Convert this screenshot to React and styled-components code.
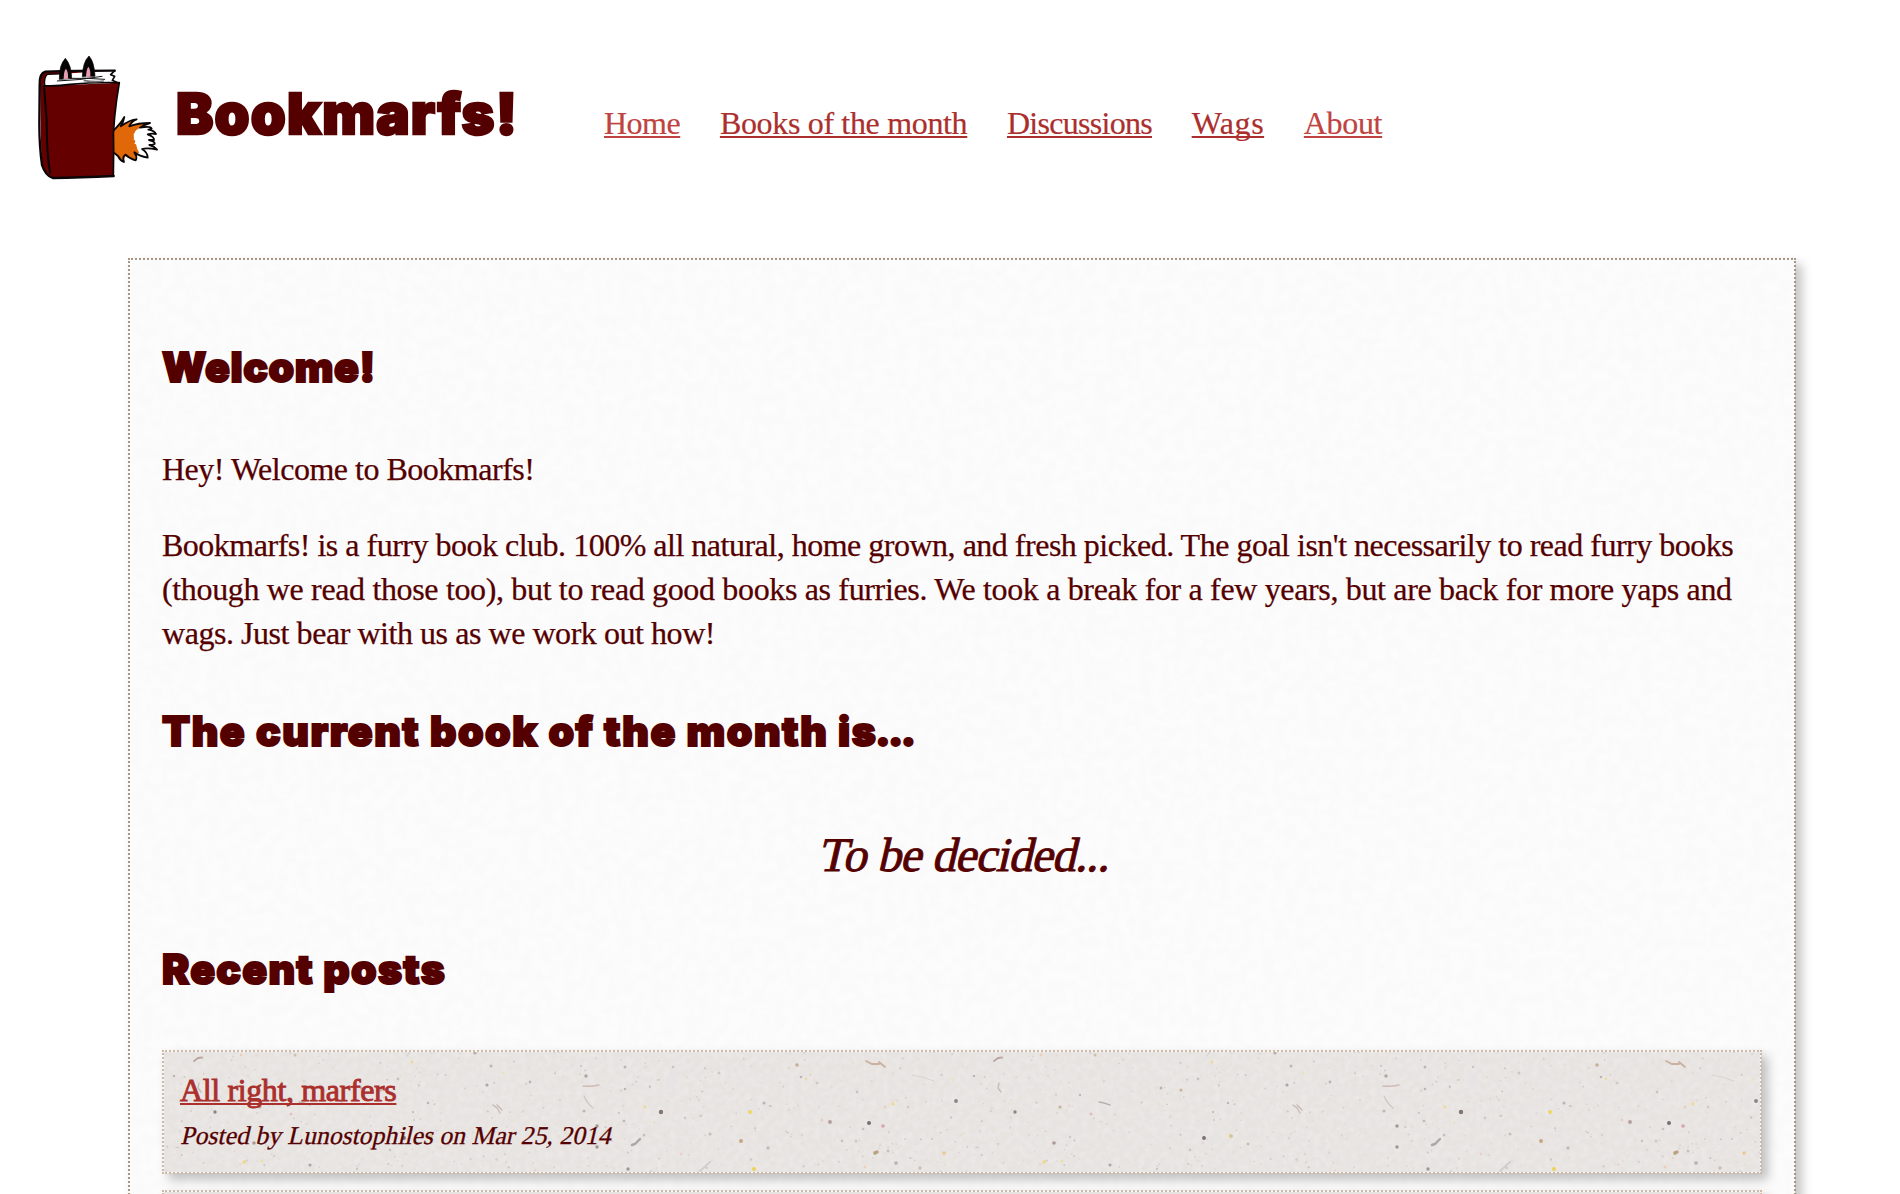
import React from "react";
import styled, { createGlobalStyle } from "styled-components";

const GlobalStyle = createGlobalStyle`
  *, *::before, *::after { box-sizing: border-box; }
  body {
    margin: 0;
    background: #fff;
    color: #500;
    font: 400 32px/44px "Liberation Serif", serif;
  }
  h1, h2, h3, p { margin: 0; font-weight: 400; }
`;

const Page = styled.div`
  height: 1194px;
  overflow: hidden;
`;

const Header = styled.header`
  display: flex;
  align-items: flex-start;
  height: 258px;
  padding: 40px 20px 0;
`;

const LogoArt = styled.svg`
  flex: none;
  width: 153px;
  height: 150px;
`;

const SiteTitle = styled.h1`
  flex: none;
  width: 431px;
  padding: 40px 0 0 3px;
  font: 900 56px/68px Inter, sans-serif;
  letter-spacing: 1.2px;
  -webkit-text-stroke: 2.4px #500;
  stroke-linejoin: round;
  white-space: nowrap;
`;

const Nav = styled.nav`
  display: flex;
  gap: 39.7px;
  padding-top: 61px;
`;

const Link = styled.a`
  color: ${(p) => (p.$soft ? "#bf4340" : "#ab2f2d")};
  letter-spacing: ${(p) => p.$track || 0}px;
  text-decoration: underline;
  text-decoration-thickness: 2px;
  text-decoration-skip-ink: none;
  text-underline-offset: 2px;
  white-space: nowrap;
  -webkit-text-stroke: ${(p) => (p.$bold ? "0.9px" : "0.2px")};
`;

const Panel = styled.main`
  position: relative;
  width: 1668px;
  min-height: 1200px;
  margin-left: 128px;
  padding: 32px;
  border: 2px dotted #a89684;
  background: #fafafa padding-box;
  box-shadow: 6px 6px 10px rgba(0, 0, 0, 0.23);
`;

const Texture = styled.svg`
  position: absolute;
  inset: 0;
  width: 100%;
  height: 100%;
`;

const Content = styled.div`
  position: relative;
`;

const Heading = styled.h2`
  padding-top: ${(p) => p.$above}px;
  padding-bottom: ${(p) => p.$below}px;
  font: 900 41px/48px Inter, sans-serif;
  letter-spacing: ${(p) => p.$track}px;
  -webkit-text-stroke: 2px #500;
  stroke-linejoin: round;
`;

const Dots = styled.span`
  margin-left: -2px;
  letter-spacing: -2.6px;
`;

const Paragraph = styled.p`
  margin-bottom: ${(p) => (p.$last ? 0 : 32)}px;
`;

const Line = styled.span`
  display: block;
  letter-spacing: ${(p) => p.$track}px;
  white-space: nowrap;
  -webkit-text-stroke: 0.25px #500;
`;

const Slanted = styled.span`
  display: inline-block;
  transform: skewX(-13deg);
  transform-origin: 0 75%;
  white-space: nowrap;
`;

const Pick = styled.p`
  font-size: 48px;
  line-height: 68px;
  letter-spacing: -0.85px;
  text-align: center;
  -webkit-text-stroke: 0.9px #500;
`;

const Post = styled.article`
  position: relative;
  height: 124px;
  margin-bottom: 16px;
  padding: 16px;
  border: 2px dotted #cdb9a5;
  background: #e7e3e1 padding-box;
  box-shadow: 6px 6px 10px rgba(0, 0, 0, 0.23);
`;

const PostBody = styled.div`
  position: relative;
  display: flex;
  flex-direction: column;
  align-items: flex-start;
  gap: 6px;
`;

const PostTitle = styled.h3`
  font-size: 32px;
`;

const Byline = styled.p`
  font-size: 25.6px;
  line-height: 36px;
  letter-spacing: 0.04px;
  -webkit-text-stroke: 0.3px #500;
`;

const INK = { stroke: "#0a0506", strokeLinejoin: "round", strokeLinecap: "round" };

function Logo() {
  return (
    <LogoArt viewBox="0 0 459 450" role="img">
      <path
        d="M278 274 L298 254 L313 231 L309 252 L350 238 L333 254 L390 249 L370 262 L393 264 L386 272 L408 282 L388 287 L401 298 L387 304 L403 314 L390 318 L411 329 L368 331 L383 352 L345 342 L349 359 L314 349 L311 364 L293 350 L278 334 Z"
        fill="#fff"
      />
      <path
        d="M278 274 L298 254 L313 231 L309 252 L350 238 L333 254 L390 249 L362 262 L345 275 L341 291 L346 304 L352 328 L358 338 L345 342 L349 359 L314 349 L311 364 L293 350 L278 334 Z"
        fill="#e06808"
      />
      <path d="M349 270l-9 15 6 5-6 8 8 4-5 9 9 3 5 18 25-10 2-40-18-21Z" fill="#fff" />
      <path
        d="M279 273 Q303 250 313 231 Q311 246 302 259 Q330 239 350 238 Q333 244 328 259 Q354 249 390 249 Q370 255 360 263 Q393 257 395 266 Q391 268 385 269 Q404 272 408 282 Q395 279 383 283 Q404 291 402 300 L387 300 Q406 305 404 312 Q397 315 388 315 Q402 318 411 329 Q382 322 366 327 Q383 337 383 353 Q359 349 343 337 Q353 350 347 361 Q328 356 317 344 Q306 350 312 366 Q300 361 294 348 L279 336"
        fill="none"
        strokeWidth="5.5"
        {...INK}
      />
      <path d="M62 110 Q64 97 76 94 L284 92 L273 104 L285 113 L279 122 L296 128 L74 138 Z" fill="#fff" />
      <path d="M60 128 Q60 98 78 94 L270 92 L130 101 L82 103 Q72 112 75 136Z" fill="#650000" />
      <path d="M60 118 L74 138 L298 128 Q284 200 281 270 L280 408 L98 413 Q66 396 64 365 Z" fill="#650000" />
      <g fill="none" {...INK}>
        <path
          d="M284 92 Q170 92 76 95 Q58 99 59 134 L58 250 Q58 320 66 375 Q76 407 98 414 Q180 413 281 408"
          strokeWidth="7"
        />
        <path d="M74 136 Q72 112 82 103 L145 101" strokeWidth="4" />
        <path d="M72 137 Q110 139 150 133 Q220 126 298 128 Q289 180 284 230 Q278 280 281 330 L280 408" strokeWidth="5" />
        <path d="M72 138 L80 240 Q80 340 90 398" strokeWidth="6" />
        <path d="M284 92 L272 104 L284 109 L277 121 L290 127" strokeWidth="5" />
      </g>
      <g fill="none" stroke="#111" strokeWidth="3" strokeLinecap="round">
        <path d="M112 123 Q180 121 246 109" />
        <path d="M150 115 Q210 114 254 118" />
        <path d="M193 122 Q225 127 250 123" stroke="#777" strokeWidth="5" />
      </g>
      <path d="M118 118 Q117 75 136 55 Q154 75 155 114 Z" {...INK} fill="#050203" strokeWidth="2" />
      <path d="M187 110 Q188 66 207 48 Q223 66 225 108 Z" {...INK} fill="#050203" strokeWidth="2" />
      <path d="M131 117 Q131 92 138 86 Q145 94 144 116 Z" fill="#e79cb0" />
      <path d="M198 111 Q199 88 205 80 Q212 88 211 110 Z" fill="#e79cb0" />
    </LogoArt>
  );
}

function PanelTexture() {
  return (
    <Texture aria-hidden="true">
      <filter id="panel-grain" x="0" y="0" width="100%" height="100%">
        <feTurbulence type="fractalNoise" baseFrequency="0.09" numOctaves="3" seed="4" />
        <feColorMatrix values="0 0 0 0 1  0 0 0 0 1  0 0 0 0 1  2.4 0 0 0 -0.75" />
      </filter>
      <rect width="100%" height="100%" filter="url(#panel-grain)" opacity="0.45" />
    </Texture>
  );
}

const GRAY = "#8d8588";
const DARK = "#5d5058";
const TAN = "#b99a78";
const GOLD = "#f0cf55";
const ROSE = "#d79aa4";
const PEACH = "#eeb592";

const FLECKS = [
  [12, 26, 1.3, GRAY], [53, 62, 1.7, DARK], [92, 93, 1.8, "#8a7070"], [82, 112, 1.8, GOLD], [100, 111, 1.6, "#f3dc8c"],
  [98, 57, 1.6, TAN], [129, 64, 1.5, ROSE], [133, 5, 1.5, TAN], [199, 38, 1.5, GRAY], [219, 40, 1.6, TAN],
  [236, 29, 1.4, "#a89c98"], [242, 88, 1.9, DARK], [269, 86, 2, "#d6c27c"], [250, 12, 1.4, GOLD], [148, 115, 1.6, GRAY],
  [228, 100, 1.4, "#b0a29c"], [118, 45, 1.2, GRAY], [79, 5, 1.4, PEACH], [251, 62, 1.3, TAN], [266, 53, 1.3, GRAY],
  [108, 87, 1.3, "#b8acaa"], [313, 3, 1.6, "#a58f86"], [329, 16, 1.5, "#a0876f"], [341, 23, 1.5, "#f1dc8a"], [325, 35, 1.6, GRAY],
  [368, 32, 1.4, GRAY], [424, 26, 1.7, GRAY], [422, 61, 1.5, GRAY], [435, 76, 1.7, "#777174"], [435, 97, 1.7, "#806a5c"],
  [482, 85, 1.5, "#a79c9c"], [499, 62, 2.2, "#6a5652"], [483, 57, 1.5, GOLD], [463, 17, 1.5, GRAY], [463, 39, 1.3, GRAY],
  [462, 71, 1.3, "#918b7d"], [466, 119, 1.7, "#77706f"], [286, 94, 1.5, "#aa958b"], [511, 17, 1.3, "#aaa0a5"], [557, 23, 1.5, "#b3ac91"],
  [548, 84, 1.5, "#a29594"], [579, 91, 2, "#bd9865"], [588, 62, 1.9, "#f1d232"], [592, 119, 1.9, "#efcb2f"], [602, 53, 1.5, GRAY],
  [608, 56, 1.3, "#b8a8a8"], [606, 98, 1.7, "#aca4ae"], [635, 15, 1.8, "#b69372"], [639, 27, 1.3, GRAY], [644, 29, 1.2, GOLD],
  [695, 42, 1.4, "#a9a0a2"], [668, 72, 1.9, "#a88a86"], [660, 70, 1.5, PEACH], [707, 73, 2, DARK], [721, 76, 1.8, "#cd7f90"],
  [723, 57, 1.5, PEACH], [731, 54, 1.7, "#f0d470"], [746, 57, 1.4, "#d8a8a0"], [680, 91, 1.4, "#b1a293"], [694, 91, 1.5, "#b9b296"],
  [715, 102, 1.8, "#a98558"], [713, 103, 1.9, "#b0966c"], [726, 101, 1.4, "#a29a90"], [734, 113, 1.8, "#97949a"], [782, 103, 1.7, "#f1b45c"],
  [794, 51, 1.9, "#716a72"], [703, 117, 1.5, PEACH], [758, 118, 1.7, "#bba99b"], [770, 89, 1.1, "#b6a9a9"], [791, 30, 1.4, "#efdda0"],
  [701, 79, 1.3, "#a79c9c"], [655, 33, 1.5, "#c3aa9a"], [523, 68, 1.4, "#b5adad"], [519, 104, 1.4, "#e8b9ae"],
];

const FIBRES = [
  ["M32 11l4-3 4-0.5", "#a88f88", 2],
  ["M37 33l-1 5 3 4", "#bba99f", 1.3],
  ["M137 52l5 1 6 2", "#a99a9c", 1.6],
  ["M331 55l4 3 3 5M335 55l5 5", "#b8a195", 1.2],
  ["M421 36q8 1 16-1", "#c3aaa0", 1.5],
  ["M422 46q3 7 9 12", "#c9b5ab", 1.2],
  ["M470 95l3-1 5-5", "#958a90", 2.4],
  ["M704 11l6 3h7M717 12l6 5", "#c09a82", 1.8],
  ["M538 121l10-9", "#cbc3c8", 2],
  ["M750 25q12 2 22 6", "#d5c9c0", 1],
];

function seeded(seed) {
  let s = seed;
  return () => {
    s = (s * 16807) % 2147483647;
    return s / 2147483647;
  };
}

const DUST = (() => {
  const rand = seeded(77);
  const tones = ["#b4acac", "#c0b2ab", "#ead49b", "#e3bdb4", "#b0a9b0", "#c9bdb6"];
  return Array.from({ length: 440 }, () => [
    rand() * 800,
    rand() * 124,
    0.6 + rand() * 0.6,
    tones[Math.floor(rand() * tones.length)],
    0.25 + rand() * 0.35,
  ]);
})();

function PaperTexture() {
  return (
    <Texture aria-hidden="true">
      <defs>
        <filter id="paper-grain" x="0" y="0" width="100%" height="100%">
          <feTurbulence type="fractalNoise" baseFrequency="0.16" numOctaves="3" seed="9" />
          <feColorMatrix values="0 0 0 0 1  0 0 0 0 1  0 0 0 0 1  2 0 0 0 -0.7" />
        </filter>
        <pattern id="flecks" width="800" height="124" patternUnits="userSpaceOnUse" patternTransform="translate(-2 -2)">
          <ellipse cx="510" cy="30" rx="7" ry="7" fill="#e9deea" opacity="0.35" />
          {DUST.map(([x, y, r, tone, alpha], i) => (
            <circle key={i} cx={x} cy={y} r={r} fill={tone} opacity={alpha} />
          ))}
          {FIBRES.map(([d, tone, width]) => (
            <path key={d} d={d} fill="none" stroke={tone} strokeWidth={width} strokeLinecap="round" opacity="0.7" />
          ))}
          {FLECKS.map(([x, y, r, tone], i) => (
            <circle key={i} cx={x} cy={y} r={r} fill={tone} opacity={r > 1.8 ? 0.8 : r > 1.55 ? 0.65 : 0.5} />
          ))}
        </pattern>
      </defs>
      <rect width="100%" height="100%" filter="url(#paper-grain)" opacity="0.2" />
      <rect width="100%" height="100%" fill="url(#flecks)" />
    </Texture>
  );
}

const LINKS = [
  { label: "Home", track: -0.5, soft: true },
  { label: "Books of the month", track: -0.33 },
  { label: "Discussions", track: -0.72 },
  { label: "Wags", track: 0.55 },
  { label: "About", track: -0.34, soft: true },
];

const INTRO = [
  [-0.495, "Bookmarfs! is a furry book club. 100% all natural, home grown, and fresh picked. The goal isn't necessarily to read furry books "],
  [-0.345, "(though we read those too), but to read good books as furries. We took a break for a few years, but are back for more yaps and "],
  [-0.45, "wags. Just bear with us as we work out how!"],
];

export default function App() {
  return (
    <Page>
      <GlobalStyle />
      <Header>
        <Logo />
        <SiteTitle>Bookmarfs!</SiteTitle>
        <Nav>
          {LINKS.map((l) => (
            <Link key={l.label} $track={l.track} $soft={l.soft}>
              {l.label}
            </Link>
          ))}
        </Nav>
      </Header>
      <Panel>
        <PanelTexture />
        <Content>
          <Heading $above={51} $below={56} $track={0.6}>Welcome!</Heading>
          <Paragraph>
            <Line $track={-0.49}>Hey! Welcome to Bookmarfs!</Line>
          </Paragraph>
          <Paragraph $last>
            {INTRO.map(([track, text]) => (
              <Line key={text} $track={track}>{text}</Line>
            ))}
          </Paragraph>
          <Heading $above={52} $below={66} $track={1.54}>
            The current book of the month is<Dots>...</Dots>
          </Heading>
          <Pick>
            <Slanted>To be decided...</Slanted>
          </Pick>
          <Heading $above={56} $below={57} $track={1.25}>Recent posts</Heading>
          <Post>
            <PaperTexture />
            <PostBody>
              <PostTitle>
                <Link $track={-0.37} $bold>All right, marfers</Link>
              </PostTitle>
              <Byline>
                <Slanted>Posted by Lunostophiles on Mar 25, 2014</Slanted>
              </Byline>
            </PostBody>
          </Post>
          <Post />
        </Content>
      </Panel>
    </Page>
  );
}
